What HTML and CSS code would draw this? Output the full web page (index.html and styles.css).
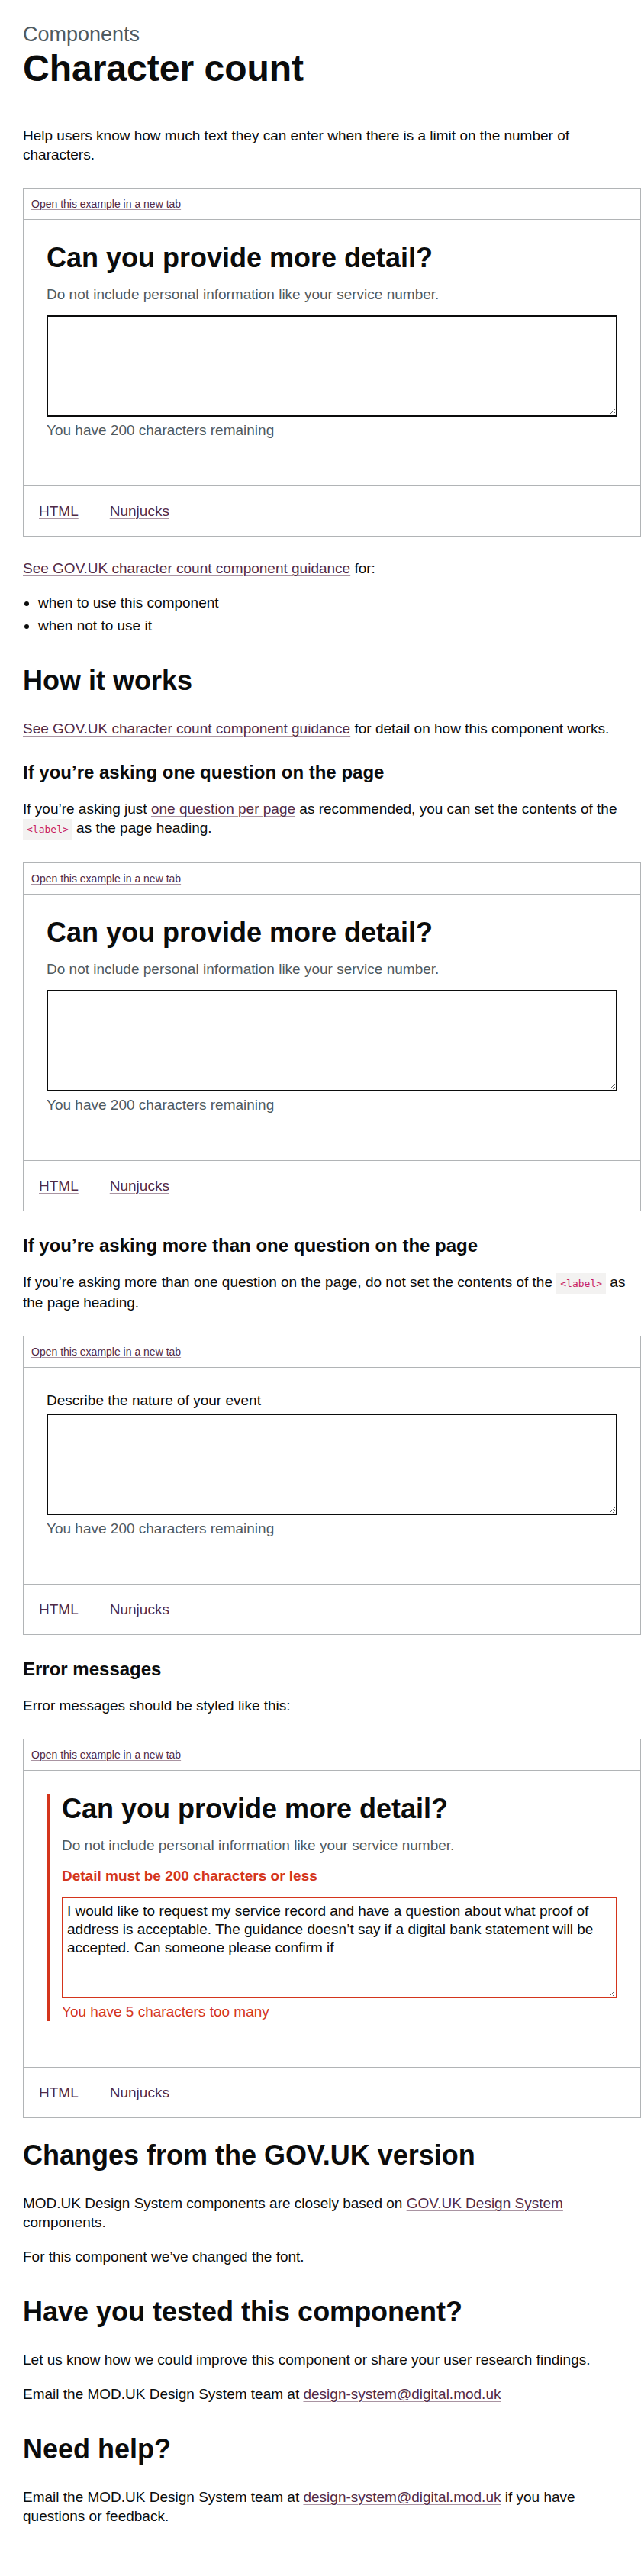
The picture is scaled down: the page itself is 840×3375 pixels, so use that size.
FILE: index.html
```html
<!DOCTYPE html>
<html lang="en">
<head>
<meta charset="utf-8">
<title>Character count</title>
<link rel="stylesheet" href="styles.css">
</head>
<body>
<main class="page">
  <span class="caption">Components</span>
  <h1 class="title">Character count</h1>
  <p class="body">Help users know how much text they can enter when there is a limit on the number of characters.</p>

  <div class="example">
    <div class="example-head"><a class="link" href="#">Open this example in a new tab</a></div>
    <div class="example-body">
      <div class="form-group">
        <h2 class="label-heading"><label class="label-l" for="d1">Can you provide more detail?</label></h2>
        <div class="hint">Do not include personal information like your service number.</div>
        <textarea class="textarea" id="d1" rows="5"></textarea>
        <div class="count">You have 200 characters remaining</div>
      </div>
    </div>
    <div class="example-tabs"><a class="link" href="#">HTML</a><a class="link" href="#">Nunjucks</a></div>
  </div>

  <p class="body"><a class="link" href="#">See GOV.UK character count component guidance</a> for:</p>
  <ul class="list">
    <li>when to use this component</li>
    <li>when not to use it</li>
  </ul>

  <h2 class="h2">How it works</h2>
  <p class="body"><a class="link" href="#">See GOV.UK character count component guidance</a> for detail on how this component works.</p>

  <h3 class="h3">If you’re asking one question on the page</h3>
  <p class="body">If you’re asking just <a class="link" href="#">one question per page</a> as recommended, you can set the contents of the <code class="code">&lt;label&gt;</code> as the page heading.</p>

  <div class="example">
    <div class="example-head"><a class="link" href="#">Open this example in a new tab</a></div>
    <div class="example-body">
      <div class="form-group">
        <h2 class="label-heading"><label class="label-l" for="d2">Can you provide more detail?</label></h2>
        <div class="hint">Do not include personal information like your service number.</div>
        <textarea class="textarea" id="d2" rows="5"></textarea>
        <div class="count">You have 200 characters remaining</div>
      </div>
    </div>
    <div class="example-tabs"><a class="link" href="#">HTML</a><a class="link" href="#">Nunjucks</a></div>
  </div>

  <h3 class="h3">If you’re asking more than one question on the page</h3>
  <p class="body">If you’re asking more than one question on the page, do not set the contents of the <code class="code">&lt;label&gt;</code> as the page heading.</p>

  <div class="example">
    <div class="example-head"><a class="link" href="#">Open this example in a new tab</a></div>
    <div class="example-body">
      <div class="form-group">
        <label class="label" for="d3">Describe the nature of your event</label>
        <textarea class="textarea" id="d3" rows="5"></textarea>
        <div class="count">You have 200 characters remaining</div>
      </div>
    </div>
    <div class="example-tabs"><a class="link" href="#">HTML</a><a class="link" href="#">Nunjucks</a></div>
  </div>

  <h3 class="h3">Error messages</h3>
  <p class="body">Error messages should be styled like this:</p>

  <div class="example">
    <div class="example-head"><a class="link" href="#">Open this example in a new tab</a></div>
    <div class="example-body">
      <div class="form-group form-group--error">
        <h2 class="label-heading"><label class="label-l" for="d4">Can you provide more detail?</label></h2>
        <div class="hint">Do not include personal information like your service number.</div>
        <p class="error-message">Detail must be 200 characters or less</p>
        <textarea class="textarea textarea--error" id="d4" rows="5">I would like to request my service record and have a question about what proof of address is acceptable. The guidance doesn’t say if a digital bank statement will be accepted. Can someone please confirm if</textarea>
        <div class="count count--error">You have 5 characters too many</div>
      </div>
    </div>
    <div class="example-tabs"><a class="link" href="#">HTML</a><a class="link" href="#">Nunjucks</a></div>
  </div>

  <h2 class="h2 h2--after-example">Changes from the GOV.UK version</h2>
  <p class="body">MOD.UK Design System components are closely based on <a class="link" href="#">GOV.UK Design System</a> components.</p>
  <p class="body">For this component we’ve changed the font.</p>

  <h2 class="h2">Have you tested this component?</h2>
  <p class="body">Let us know how we could improve this component or share your user research findings.</p>
  <p class="body">Email the MOD.UK Design System team at <a class="link" href="#">design-system@digital.mod.uk</a></p>

  <h2 class="h2">Need help?</h2>
  <p class="body">Email the MOD.UK Design System team at <a class="link" href="#">design-system@digital.mod.uk</a> if you have questions or feedback.</p>
</main>
</body>
</html>
```

FILE: styles.css
```css
* { box-sizing: border-box; }
html, body { margin: 0; padding: 0; background: #ffffff; }
body {
  font-family: "Liberation Sans", Arial, sans-serif;
  color: #0b0c0c;
}
.page {
  display: block;
  width: 840px;
  padding: 30px 0 50px 30px;
}
.caption {
  display: block;
  font-size: 27px;
  line-height: 30px;
  color: #505a5f;
  margin-bottom: 5px;
}
.title {
  font-size: 48px;
  line-height: 50px;
  font-weight: 700;
  margin: 0 0 50px;
}
.body {
  font-size: 19px;
  line-height: 25px;
  margin: 0 0 20px;
  max-width: 800px;
}
.list {
  font-size: 19px;
  line-height: 25px;
  margin: 0 0 20px;
  padding-left: 20px;
}
.list li { margin-bottom: 5px; }
.h2 {
  font-size: 36px;
  line-height: 40px;
  font-weight: 700;
  margin: 40px 0 30px;
}
.h2--after-example { margin-top: 0; }
.h3 {
  font-size: 24px;
  line-height: 30px;
  font-weight: 700;
  margin: 30px 0 20px;
}
.link {
  color: #532a45;
  text-decoration: underline;
  text-decoration-thickness: 1px;
  text-underline-offset: 0.1578em;
  text-decoration-color: #a994a2;
}
.code {
  font-family: "DejaVu Sans Mono", monospace;
  font-size: 13px;
  color: #c81e64;
  background: #f3f2f1;
  padding: 6px 5px;
}
.example {
  border: 1px solid #b1b4b6;
  margin: 31px 0 29px;
  width: 810px;
}
.example-head {
  padding: 10px;
  font-size: 14px;
  line-height: 20px;
  border-bottom: 1px solid #b1b4b6;
}
.example-body {
  padding: 30px;
}
.example-tabs {
  border-top: 1px solid #b1b4b6;
  padding: 20px;
  display: flex;
  gap: 41px;
  font-size: 19px;
  line-height: 25px;
}
.form-group { margin-bottom: 30px; }
.form-group--error {
  border-left: 5px solid #d4351c;
  padding-left: 15px;
}
.label-heading { margin: 0; font-size: inherit; font-weight: inherit; }
.label-l {
  display: block;
  font-size: 36px;
  line-height: 40px;
  font-weight: 700;
  margin-bottom: 15px;
}
.label {
  display: block;
  font-size: 19px;
  line-height: 25px;
  margin-bottom: 5px;
}
.hint {
  font-size: 19px;
  line-height: 25px;
  color: #505a5f;
  margin-bottom: 15px;
}
.error-message {
  font-size: 19px;
  line-height: 25px;
  font-weight: 700;
  color: #d4351c;
  margin: 0 0 15px;
}
.textarea {
  display: block;
  width: 100%;
  height: 133px;
  margin: 0 0 5px;
  padding: 5px;
  border: 2px solid #0b0c0c;
  border-radius: 0;
  font-family: "Liberation Sans", Arial, sans-serif;
  font-size: 19px;
  line-height: 1.25;
  color: #0b0c0c;
  background: #ffffff;
  resize: vertical;
}
.textarea--error { border-color: #d4351c; }
.count {
  font-size: 19px;
  line-height: 25px;
  color: #505a5f;
}
.count--error { color: #d4351c; }
```
